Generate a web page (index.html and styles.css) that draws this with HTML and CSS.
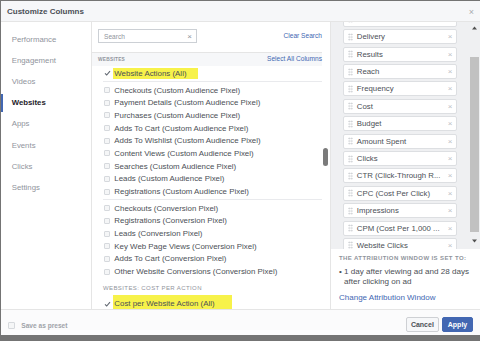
FILE: index.html
```html
<!DOCTYPE html>
<html lang="en">
<head>
    <meta charset="UTF-8">
    <title>Customize Columns</title>
    <link rel="stylesheet" href="styles.css">
</head>
<body>
    <div class="dialog">
        <div class="dlg-head">
            <h1>Customize Columns</h1>
            <span class="close">&times;</span>
        </div>

        <div class="dlg-body">
            <ul class="side-nav">
                <li>Performance</li>
                <li>Engagement</li>
                <li>Videos</li>
                <li class="active">Websites</li>
                <li>Apps</li>
                <li>Events</li>
                <li>Clicks</li>
                <li>Settings</li>
            </ul>

            <div class="mid">
                <div class="mid-main">
                    <div class="search-row">
                        <div class="search-box">
                            <span>Search</span>
                            <span class="clear-x">&times;</span>
                        </div>
                        <a href="#" class="link">Clear Search</a>
                    </div>
                    <div class="band">
                        <span class="band-title">WEBSITES</span>
                        <a href="#" class="link">Select All Columns</a>
                    </div>
                    <div class="col-list">
                        <div class="group">
                            <div class="row"><span class="tick"><svg width="7" height="6" viewBox="0 0 7 6"><path d="M1 3.4 L2.7 5 L6 1.2" fill="none" stroke="#606770" stroke-width="1.1"/></svg></span><span class="hl">Website Actions (All)</span></div>
                        </div>
                        <div class="group">
                            <div class="row"><span class="box"></span>Checkouts (Custom Audience Pixel)</div>
                            <div class="row"><span class="box"></span>Payment Details (Custom Audience Pixel)</div>
                            <div class="row"><span class="box"></span>Purchases (Custom Audience Pixel)</div>
                            <div class="row"><span class="box"></span>Adds To Cart (Custom Audience Pixel)</div>
                            <div class="row"><span class="box"></span>Adds To Wishlist (Custom Audience Pixel)</div>
                            <div class="row"><span class="box"></span>Content Views (Custom Audience Pixel)</div>
                            <div class="row"><span class="box"></span>Searches (Custom Audience Pixel)</div>
                            <div class="row"><span class="box"></span>Leads (Custom Audience Pixel)</div>
                            <div class="row"><span class="box"></span>Registrations (Custom Audience Pixel)</div>
                        </div>
                        <div class="group last">
                            <div class="row"><span class="box"></span>Checkouts (Conversion Pixel)</div>
                            <div class="row"><span class="box"></span>Registrations (Conversion Pixel)</div>
                            <div class="row"><span class="box"></span>Leads (Conversion Pixel)</div>
                            <div class="row"><span class="box"></span>Key Web Page Views (Conversion Pixel)</div>
                            <div class="row"><span class="box"></span>Adds To Cart (Conversion Pixel)</div>
                            <div class="row"><span class="box"></span>Other Website Conversions (Conversion Pixel)</div>
                        </div>
                        <div class="sub-title">WEBSITES: COST PER ACTION</div>
                        <div class="group last">
                            <div class="row"><span class="tick"><svg width="7" height="6" viewBox="0 0 7 6"><path d="M1 3.4 L2.7 5 L6 1.2" fill="none" stroke="#606770" stroke-width="1.1"/></svg></span><span class="hl hl-big">Cost per Website Action (All)</span></div>
                        </div>
                    </div>
                </div>
                <div class="mid-scroll"><div class="thumb"></div></div>
            </div>

            <div class="right">
                <div class="picked">
                    <div class="picked-wrap">
                        <ul class="picked-list">
                            <li><span class="grip"></span></li>
                            <li><span class="grip"></span>Delivery<span class="rm">&times;</span></li>
                            <li><span class="grip"></span>Results<span class="rm">&times;</span></li>
                            <li><span class="grip"></span>Reach<span class="rm">&times;</span></li>
                            <li><span class="grip"></span>Frequency<span class="rm">&times;</span></li>
                            <li><span class="grip"></span>Cost<span class="rm">&times;</span></li>
                            <li><span class="grip"></span>Budget<span class="rm">&times;</span></li>
                            <li><span class="grip"></span>Amount Spent<span class="rm">&times;</span></li>
                            <li><span class="grip"></span>Clicks<span class="rm">&times;</span></li>
                            <li><span class="grip"></span>CTR (Click-Through R...<span class="rm">&times;</span></li>
                            <li><span class="grip"></span>CPC (Cost Per Click)<span class="rm">&times;</span></li>
                            <li><span class="grip"></span>Impressions<span class="rm">&times;</span></li>
                            <li><span class="grip"></span>CPM (Cost Per 1,000 ...<span class="rm">&times;</span></li>
                            <li><span class="grip"></span>Website Clicks<span class="rm">&times;</span></li>
                        </ul>
                    </div>
                    <div class="vscroll">
                        <svg class="arr-up" width="5" height="4" viewBox="0 0 5 4"><path d="M0 3.5 L2.5 0.5 L5 3.5 Z" fill="#505050"/></svg>
                        <div class="vthumb"></div>
                        <svg class="arr-down" width="5" height="4" viewBox="0 0 5 4"><path d="M0 0.5 L2.5 3.5 L5 0.5 Z" fill="#505050"/></svg>
                    </div>
                </div>
                <div class="attr">
                    <div class="attr-title">THE ATTRIBUTION WINDOW IS SET TO:</div>
                    <ul class="attr-list">
                        <li>1 day after viewing ad and 28 days after clicking on ad</li>
                    </ul>
                    <a href="#" class="attr-link">Change Attribution Window</a>
                </div>
            </div>
        </div>

        <div class="dlg-foot">
            <label class="preset"><span class="box"></span>Save as preset</label>
            <div class="btns">
                <button class="btn btn-cancel">Cancel</button>
                <button class="btn btn-apply">Apply</button>
            </div>
        </div>
    </div>
</body>
</html>
```

FILE: styles.css
```css
* {
    margin: 0;
    padding: 0;
    box-sizing: border-box;
}
html, body {
    height: 341px;
    overflow: hidden;
}
body {
    font-family: "Liberation Sans", Arial, sans-serif;
    background-color: #747474;
    padding: 1px 0 0 1px;
    color: #4b4f56;
}
a {
    text-decoration: none;
}
ul {
    list-style: none;
}
.dialog {
    width: 479px;
    height: 334px;
    background-color: #fff;
    display: flex;
    flex-direction: column;
}

/* header */
.dlg-head {
    height: 21px;
    flex: none;
    display: flex;
    align-items: center;
    justify-content: space-between;
    padding: 0 6px 0 6px;
    background-color: #f6f7f9;
    border-bottom: 1px solid #e5e5e5;
}
.dlg-head h1 {
    font-size: 8px;
    font-weight: bold;
    color: #4b4f56;
}
.close {
    font-size: 9px;
    color: #a8abaf;
    margin-top: 2px;
}

.dlg-body {
    flex: 1;
    display: flex;
    min-height: 0;
}

/* left nav */
.side-nav {
    width: 91px;
    flex: none;
    border-right: 1px solid #e5e5e5;
    padding-top: 6.7px;
}
.side-nav li {
    position: relative;
    height: 21.2px;
    line-height: 21.2px;
    padding-left: 10.7px;
    font-size: 7.8px;
    color: #90949c;
}
.side-nav li.active {
    color: #1d2129;
    font-weight: bold;
}
.side-nav li.active::before {
    content: "";
    position: absolute;
    left: 0;
    top: 1.6px;
    width: 2px;
    height: 18px;
    background-color: #4267b2;
}

/* middle column */
.mid {
    width: 239px;
    flex: none;
    display: flex;
    border-right: 1px solid #e5e5e5;
}
.mid-main {
    width: 230px;
    display: flex;
    flex-direction: column;
    min-height: 0;
}
.search-row {
    height: 30px;
    flex: none;
    display: flex;
    justify-content: space-between;
    padding: 7px 0 0 6px;
}
.search-box {
    width: 99px;
    height: 14px;
    border: 1px solid #ccd0d5;
    display: flex;
    align-items: center;
    justify-content: space-between;
    padding: 0 4px 0 5px;
    font-size: 6.6px;
    color: #90949c;
}
.clear-x {
    font-size: 8px;
    color: #90949c;
}
.link {
    font-size: 6.6px;
    color: #4267b2;
    line-height: 14px;
}
.band {
    height: 13.5px;
    flex: none;
    display: flex;
    align-items: center;
    justify-content: space-between;
    padding-left: 6px;
    background-color: #f6f7f9;
    border-top: 1px solid #e5e5e5;
}
.band-title {
    font-size: 4.8px;
    letter-spacing: 0.25px;
    color: #90949c;
    font-weight: bold;
}
.col-list {
    flex: 1;
    overflow: hidden;
    padding-left: 11px;
}
.group {
    padding: 1.5px 0 1.5px 1px;
    border-bottom: 1px solid #e9eaed;
}
.group.last {
    border-bottom: none;
}
.row {
    height: 12.7px;
    display: flex;
    align-items: center;
    font-size: 7.9px;
    color: #4b4f56;
    white-space: nowrap;
}
.box {
    width: 6px;
    height: 6px;
    flex: none;
    border: 1px solid #d6d9dd;
    background-color: #f5f6f7;
    border-radius: 1px;
    margin-right: 4.3px;
}
.tick {
    width: 7px;
    flex: none;
    display: flex;
    margin-right: 3.3px;
}
.hl {
    background-color: #f7f24a;
    padding: 1px 11px 1px 1.5px;
    margin-left: -1.5px;
}
.hl-big {
    padding: 4px 17px 4px 1px;
    margin-left: -1px;
}
.sub-title {
    height: 15px;
    line-height: 15px;
    margin-top: 1.5px;
    font-size: 6px;
    letter-spacing: 0.4px;
    color: #90949c;
}
.mid-scroll {
    width: 8px;
    padding: 126px 0 0 1px;
}
.thumb {
    width: 5px;
    height: 18px;
    border-radius: 3px;
    background-color: #7b7b7b;
}

/* right column */
.right {
    flex: 1;
    display: flex;
    flex-direction: column;
    background-color: #eff0f2;
}
.picked {
    height: 227px;
    flex: none;
    display: flex;
    overflow: hidden;
}
.picked-wrap {
    width: 138px;
    overflow: hidden;
    padding-left: 12.3px;
}
.picked-list {
    margin-top: -10.1px;
}
.picked-list li {
    width: 114px;
    height: 15px;
    margin-bottom: 2.4px;
    display: flex;
    align-items: center;
    background-color: #fff;
    border: 1px solid #dddfe2;
    border-radius: 2px;
    padding-left: 3.5px;
    font-size: 7.8px;
    color: #4b4f56;
    white-space: nowrap;
}
.grip {
    width: 5px;
    height: 8px;
    flex: none;
    margin-right: 4px;
    background-image: radial-gradient(circle, #c3c6cb 0.75px, transparent 0.95px);
    background-size: 2.5px 2.7px;
}
.rm {
    margin-left: auto;
    padding-right: 4px;
    font-size: 8px;
    color: #bcc0c4;
}
.vscroll {
    width: 11px;
    display: flex;
    flex-direction: column;
    align-items: center;
}
.arr-up {
    margin-top: 4.3px;
}
.vthumb {
    width: 8.6px;
    height: 175px;
    margin-top: 26.7px;
    background-color: #c1c1c1;
}
.arr-down {
    margin-top: 7px;
}
.attr {
    flex: 1;
    background-color: #fff;
    padding: 5px 2px 0 8px;
}
.attr-title {
    font-size: 6px;
    line-height: 9px;
    font-weight: bold;
    letter-spacing: 0.4px;
    color: #90949c;
}
.attr-list {
    margin-top: 4.2px;
}
.attr-list li {
    position: relative;
    padding-left: 5px;
    font-size: 8.1px;
    line-height: 10px;
    color: #4b4f56;
}
.attr-list li::before {
    content: "\2022";
    position: absolute;
    left: 0;
    top: 0;
}
.attr-link {
    display: block;
    margin-top: 5.4px;
    font-size: 8px;
    line-height: 10px;
    color: #4267b2;
}

/* footer */
.dlg-foot {
    height: 26px;
    flex: none;
    display: flex;
    justify-content: space-between;
    align-items: flex-start;
    border-top: 1px solid #e5e5e5;
    background-color: #fbfbfc;
    padding: 7px 6.7px 0 7.3px;
}
.preset {
    display: flex;
    align-items: center;
    height: 16px;
    font-size: 6.6px;
    font-weight: bold;
    color: #a0a3a9;
}
.preset .box {
    width: 7px;
    height: 7px;
    margin-right: 6px;
}
.btns {
    display: flex;
    gap: 2.7px;
}
.btn {
    height: 14.7px;
    font-family: inherit;
    font-size: 7px;
    font-weight: bold;
    border-radius: 2px;
    border: 1px solid #ced0d4;
}
.btn-cancel {
    width: 33.3px;
    background-color: #f6f7f9;
    color: #4b4f56;
}
.btn-apply {
    width: 31.6px;
    background-color: #4267b2;
    border-color: #4267b2;
    color: #fff;
}
```
